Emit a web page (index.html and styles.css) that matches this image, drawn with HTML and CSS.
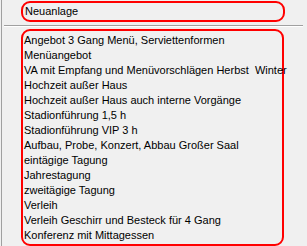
FILE: index.html
```html
<!DOCTYPE html>
<html lang="de">
<head>
  <meta charset="UTF-8">
  <title>Veranstaltungsvorlagen</title>
  <link rel="stylesheet" href="styles.css">
</head>
<body>
  <div class="menu">
    <div class="new-item">Neuanlage</div>
    <div class="separator"></div>
    <ul class="templates">
      <li>Angebot 3 Gang Menü, Serviettenformen</li>
      <li>Menüangebot</li>
      <li>VA mit Empfang und Menüvorschlägen Herbst&nbsp; Winter</li>
      <li>Hochzeit außer Haus</li>
      <li>Hochzeit außer Haus auch interne Vorgänge</li>
      <li>Stadionführung 1,5 h</li>
      <li>Stadionführung VIP 3 h</li>
      <li>Aufbau, Probe, Konzert, Abbau Großer Saal</li>
      <li>eintägige Tagung</li>
      <li>Jahrestagung</li>
      <li>zweitägige Tagung</li>
      <li>Verleih</li>
      <li>Verleih Geschirr und Besteck für 4 Gang</li>
      <li>Konferenz mit Mittagessen</li>
    </ul>
  </div>
</body>
</html>
```

FILE: styles.css
```css
html, body {
  margin: 0;
  padding: 0;
  height: 100%;
  overflow: hidden;
}
body {
  background-color: #f0f0f0;
  font-family: "Liberation Sans", Arial, sans-serif;
  font-size: 11px;
  color: #000;
  padding-left: 1px;
}
.menu {
  height: 100%;
  border-left: 1px solid #a0a0a0;
  padding-top: 1px;
}
.new-item {
  margin-left: 19px;
  width: 258px;
  height: 17px;
  line-height: 17px;
  padding-left: 2px;
  border: 2px solid #ff0000;
  border-radius: 9px;
}
.separator {
  margin: 3px 4px 0 2px;
  height: 0;
  border-top: 1px solid #a0a0a0;
  border-bottom: 1px solid #ffffff;
}
.templates {
  list-style: none;
  margin: 2px 0 0 19px;
  padding: 2px 0 1px 1px;
  width: 258px;
  border: 2px solid #ff0000;
  border-radius: 9px;
}
.templates li {
  line-height: 15px;
  height: 15px;
  white-space: nowrap;
}
```
